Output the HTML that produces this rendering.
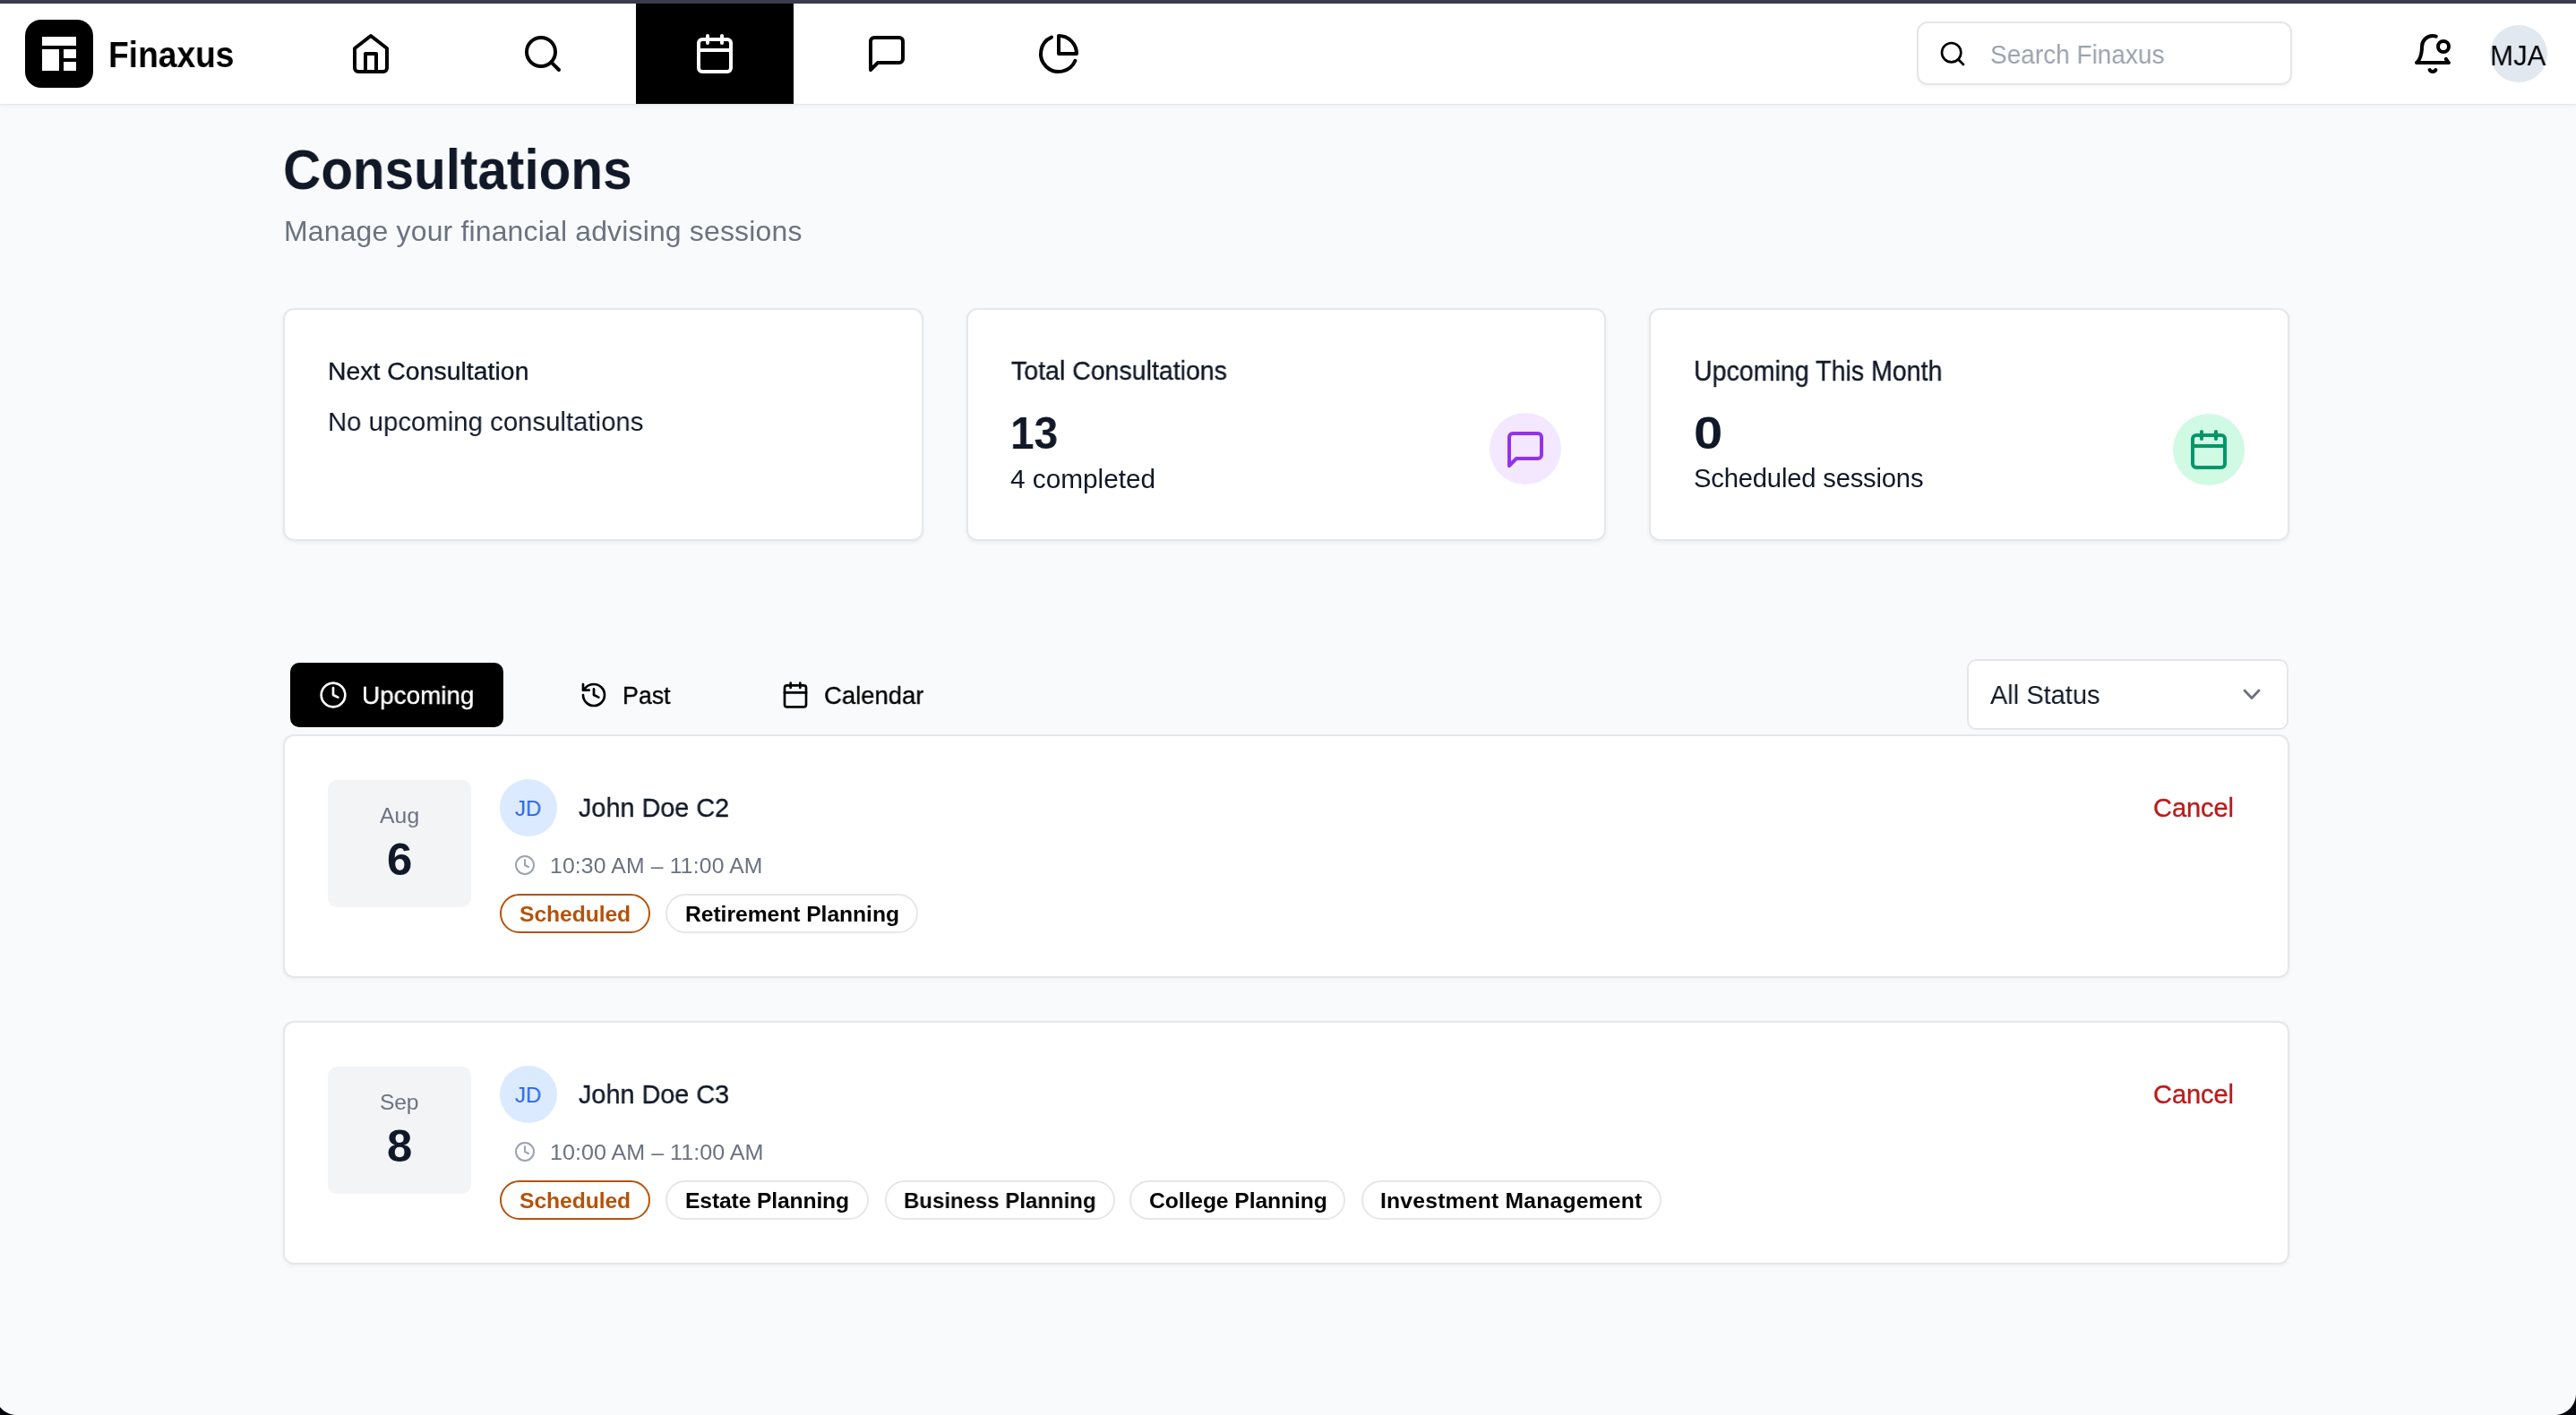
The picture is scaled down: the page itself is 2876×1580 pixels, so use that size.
<!DOCTYPE html>
<html><head><meta charset="utf-8"><title>Finaxus - Consultations</title>
<style>
*{box-sizing:border-box;margin:0;padding:0}
html,body{width:2876px;height:1580px;overflow:hidden;background:#f9fafb;font-family:"Liberation Sans",sans-serif}
.t{position:absolute;line-height:1;white-space:nowrap;will-change:transform}
.ic{position:absolute;display:block}
.bx{position:absolute}
</style></head><body>
<div class="bx" style="left:0;top:0;width:2876px;height:4px;background:#3c3c4e"></div>
<div class="bx" style="left:0;top:4px;width:2876px;height:112px;background:#fff;box-shadow:0 1px 0 #e5e7eb,0 3px 8px rgba(0,0,0,0.05)"></div>
<div class="bx" style="left:28px;top:22px;width:76px;height:76px;background:#000;border-radius:18px"></div>
<div class="bx" style="left:47px;top:41px;width:38px;height:10px;background:#fff"></div>
<div class="bx" style="left:47px;top:55px;width:19px;height:24px;background:#fff"></div>
<div class="bx" style="left:71px;top:55px;width:14px;height:10px;background:#fff"></div>
<div class="bx" style="left:71px;top:69px;width:14px;height:10px;background:#fff"></div>
<div class="t" style="left:121.20px;top:41.00px;font-size:40.70px;font-weight:bold;color:#000;letter-spacing:0.000px;transform:scaleX(0.9135);transform-origin:0 0;">Finaxus</div>
<div class="bx" style="left:710px;top:4px;width:176px;height:112px;background:#000"></div>
<svg class="ic" style="left:390px;top:36px" width="48" height="48" viewBox="0 0 24 24" fill="none" stroke="#000" stroke-width="2" stroke-linecap="round" stroke-linejoin="round"><path d="m3 9 9-7 9 7v11a2 2 0 0 1-2 2H5a2 2 0 0 1-2-2z"/><polyline points="9 22 9 12 15 12 15 22"/></svg>
<svg class="ic" style="left:582px;top:36px" width="48" height="48" viewBox="0 0 24 24" fill="none" stroke="#000" stroke-width="2" stroke-linecap="round" stroke-linejoin="round"><circle cx="11" cy="11" r="8"/><path d="m21 21-4.34-4.34"/></svg>
<svg class="ic" style="left:774px;top:36px" width="48" height="48" viewBox="0 0 24 24" fill="none" stroke="#fff" stroke-width="2" stroke-linecap="round" stroke-linejoin="round"><path d="M8 2v4"/><path d="M16 2v4"/><rect width="18" height="18" x="3" y="4" rx="2"/><path d="M3 10h18"/></svg>
<svg class="ic" style="left:966px;top:36px" width="48" height="48" viewBox="0 0 24 24" fill="none" stroke="#000" stroke-width="2" stroke-linecap="round" stroke-linejoin="round"><path d="M21 15a2 2 0 0 1-2 2H7l-4 4V5a2 2 0 0 1 2-2h14a2 2 0 0 1 2 2z"/></svg>
<svg class="ic" style="left:1158px;top:36px" width="48" height="48" viewBox="0 0 24 24" fill="none" stroke="#000" stroke-width="2" stroke-linecap="round" stroke-linejoin="round"><path d="M21.21 15.89A10 10 0 1 1 8 2.83"/><path d="M22 12A10 10 0 0 0 12 2v10z"/></svg>
<div class="bx" style="left:2140px;top:24px;width:419px;height:71px;background:#fff;border:2px solid #e6e6e8;border-radius:12px;box-shadow:0 2px 4px rgba(0,0,0,0.04)"></div>
<svg class="ic" style="left:2164px;top:44px" width="32" height="32" viewBox="0 0 24 24" fill="none" stroke="#000" stroke-width="2" stroke-linecap="round" stroke-linejoin="round"><circle cx="11" cy="11" r="8"/><path d="m21 21-4.34-4.34"/></svg>
<div class="t" style="left:2222.20px;top:47.00px;font-size:29.07px;font-weight:normal;color:#9ca3af;letter-spacing:0.000px;transform:scaleX(0.9630);transform-origin:0 0;">Search Finaxus</div>
<svg class="ic" style="left:2692px;top:36px" width="48" height="48" viewBox="0 0 24 24" fill="none" stroke="#000" stroke-width="2" stroke-linecap="round" stroke-linejoin="round"><path d="M19.4 14.9C20.2 16.4 21 17 21 17H3s3-2 3-9c0-3.3 2.7-6 6-6 .7 0 1.3.1 1.9.3"/><path d="M10.3 21a1.94 1.94 0 0 0 3.4 0"/><circle cx="18" cy="8" r="3"/></svg>
<div class="bx" style="left:2780px;top:28px;width:64px;height:64px;background:#e2e8f0;border-radius:50%"></div>
<div class="t" style="left:2780.20px;top:46.00px;font-size:31.98px;font-weight:normal;color:#000;letter-spacing:0.000px;transform:scaleX(0.9773);transform-origin:0 0;">MJA</div>
<div class="t" style="left:316.20px;top:158.00px;font-size:62.50px;font-weight:bold;color:#111827;letter-spacing:0.000px;transform:scaleX(0.9348);transform-origin:0 0;">Consultations</div>
<div class="t" style="left:317.20px;top:242.00px;font-size:31.98px;font-weight:normal;color:#6b7280;letter-spacing:0.162px;">Manage your financial advising sessions</div>
<div class="bx" style="left:316px;top:344px;width:714.67px;height:260px;background:#fff;border:2px solid #e6e7ea;border-radius:12px;box-shadow:0 2px 4px rgba(0,0,0,0.05)"></div>
<div class="bx" style="left:1078.67px;top:344px;width:714.66px;height:260px;background:#fff;border:2px solid #e6e7ea;border-radius:12px;box-shadow:0 2px 4px rgba(0,0,0,0.05)"></div>
<div class="bx" style="left:1841.33px;top:344px;width:714.67px;height:260px;background:#fff;border:2px solid #e6e7ea;border-radius:12px;box-shadow:0 2px 4px rgba(0,0,0,0.05)"></div>
<div class="t" style="left:366.20px;top:400.00px;font-size:28.34px;font-weight:normal;color:#111827;letter-spacing:0.049px;-webkit-text-stroke:0.35px currentColor;">Next Consultation</div>
<div class="t" style="left:366.20px;top:455.60px;font-size:29.94px;font-weight:normal;color:#111827;letter-spacing:0.000px;transform:scaleX(0.9805);transform-origin:0 0;">No upcoming consultations</div>
<div class="t" style="left:1128.70px;top:400.00px;font-size:29.07px;font-weight:normal;color:#111827;letter-spacing:0.000px;transform:scaleX(0.9812);transform-origin:0 0;-webkit-text-stroke:0.35px currentColor;">Total Consultations</div>
<div class="t" style="left:1127.70px;top:458.70px;font-size:50.87px;font-weight:bold;color:#111827;letter-spacing:0.000px;transform:scaleX(0.94);transform-origin:0 0;">13</div>
<div class="t" style="left:1128.20px;top:519.50px;font-size:29.80px;font-weight:normal;color:#111827;letter-spacing:-0.023px;">4 completed</div>
<div class="bx" style="left:1663px;top:461px;width:80px;height:80px;background:#f3e8ff;border-radius:50%"></div>
<svg class="ic" style="left:1679px;top:478px" width="48" height="48" viewBox="0 0 24 24" fill="none" stroke="#9333ea" stroke-width="2" stroke-linecap="round" stroke-linejoin="round"><path d="M21 15a2 2 0 0 1-2 2H7l-4 4V5a2 2 0 0 1 2-2h14a2 2 0 0 1 2 2z"/></svg>
<div class="t" style="left:1891.20px;top:399.00px;font-size:30.52px;font-weight:normal;color:#111827;letter-spacing:0.000px;transform:scaleX(0.9365);transform-origin:0 0;-webkit-text-stroke:0.35px currentColor;">Upcoming This Month</div>
<div class="t" style="left:1890.70px;top:458.70px;font-size:50.87px;font-weight:bold;color:#111827;letter-spacing:0.000px;transform:scaleX(1.14);transform-origin:0 0;">0</div>
<div class="t" style="left:1891.20px;top:520.40px;font-size:29.22px;font-weight:normal;color:#111827;letter-spacing:-0.198px;">Scheduled sessions</div>
<div class="bx" style="left:2426px;top:462px;width:80px;height:80px;background:#d1fae5;border-radius:50%"></div>
<svg class="ic" style="left:2442px;top:478px" width="48" height="48" viewBox="0 0 24 24" fill="none" stroke="#059669" stroke-width="2" stroke-linecap="round" stroke-linejoin="round"><path d="M8 2v4"/><path d="M16 2v4"/><rect width="18" height="18" x="3" y="4" rx="2"/><path d="M3 10h18"/></svg>
<div class="bx" style="left:324px;top:740px;width:238px;height:72px;background:#000;border-radius:10px"></div>
<svg class="ic" style="left:356px;top:760px" width="32" height="32" viewBox="0 0 24 24" fill="none" stroke="#fff" stroke-width="2" stroke-linecap="round" stroke-linejoin="round"><circle cx="12" cy="12" r="10"/><polyline points="12 6 12 12 16 14"/></svg>
<div class="t" style="left:404.20px;top:762.00px;font-size:28.34px;font-weight:normal;color:#fff;letter-spacing:0.000px;transform:scaleX(0.9835);transform-origin:0 0;-webkit-text-stroke:0.35px currentColor;">Upcoming</div>
<svg class="ic" style="left:647px;top:760px" width="32" height="32" viewBox="0 0 24 24" fill="none" stroke="#000" stroke-width="2" stroke-linecap="round" stroke-linejoin="round"><path d="M3 12a9 9 0 1 0 9-9 9.75 9.75 0 0 0-6.74 2.74L3 8"/><path d="M3 3v5h5"/><path d="M12 7v5l4 2"/></svg>
<div class="t" style="left:695.20px;top:762.00px;font-size:28.34px;font-weight:normal;color:#000;letter-spacing:0.000px;transform:scaleX(0.9433);transform-origin:0 0;-webkit-text-stroke:0.35px currentColor;">Past</div>
<svg class="ic" style="left:872px;top:760px" width="32" height="32" viewBox="0 0 24 24" fill="none" stroke="#000" stroke-width="2" stroke-linecap="round" stroke-linejoin="round"><path d="M8 2v4"/><path d="M16 2v4"/><rect width="18" height="18" x="3" y="4" rx="2"/><path d="M3 10h18"/></svg>
<div class="t" style="left:920.20px;top:762.00px;font-size:28.34px;font-weight:normal;color:#000;letter-spacing:0.000px;transform:scaleX(0.9694);transform-origin:0 0;-webkit-text-stroke:0.35px currentColor;">Calendar</div>
<div class="bx" style="left:2196px;top:736px;width:359px;height:79px;background:#fff;border:2px solid #e6e6e8;border-radius:10px"></div>
<div class="t" style="left:2222.20px;top:761.40px;font-size:29.80px;font-weight:normal;color:#111827;letter-spacing:0.000px;transform:scaleX(0.9733);transform-origin:0 0;">All Status</div>
<svg class="ic" style="left:2496px;top:762px" width="36" height="28" viewBox="0 0 36 28"><polyline points="10,9 18,17.5 26,9" fill="none" stroke="#6b7280" stroke-width="2.8" stroke-linecap="round" stroke-linejoin="round"/></svg>
<div class="bx" style="left:316px;top:820px;width:2240px;height:272px;background:#fff;border:2px solid #e5e7eb;border-radius:12px;box-shadow:0 2px 4px rgba(0,0,0,0.04)"></div>
<div class="bx" style="left:366px;top:871px;width:160px;height:142px;background:#f3f4f6;border-radius:10px"></div>
<div class="t" style="left:424.20px;top:899.00px;font-size:24.71px;font-weight:normal;color:#6b7280;letter-spacing:0.121px;">Aug</div>
<div class="t" style="left:431.70px;top:934.60px;font-size:50.87px;font-weight:bold;color:#111827;letter-spacing:0.000px;">6</div>
<div class="bx" style="left:558px;top:870px;width:64px;height:64px;background:#dbeafe;border-radius:50%"></div>
<div class="t" style="left:575.20px;top:891.20px;font-size:24.56px;font-weight:normal;color:#2563eb;letter-spacing:0.000px;transform:scaleX(0.9828);transform-origin:0 0;">JD</div>
<div class="t" style="left:646.20px;top:887.00px;font-size:30.23px;font-weight:normal;color:#111827;letter-spacing:0.000px;transform:scaleX(0.9532);transform-origin:0 0;-webkit-text-stroke:0.35px currentColor;">John Doe C2</div>
<svg class="ic" style="left:574px;top:954px" width="24" height="24" viewBox="0 0 24 24" fill="none" stroke="#9ca3af" stroke-width="2" stroke-linecap="round" stroke-linejoin="round"><circle cx="12" cy="12" r="10"/><polyline points="12 6 12 12 16 14"/></svg>
<div class="t" style="left:614.20px;top:955.00px;font-size:24.71px;font-weight:normal;color:#6b7280;letter-spacing:0.170px;">10:30 AM – 11:00 AM</div>
<div class="bx" style="left:558px;top:998px;width:168px;height:44px;border:2px solid #b45309;border-radius:22px;background:#fff"></div>
<div class="t" style="left:580.20px;top:1009.00px;font-size:24.71px;font-weight:bold;color:#b45309;letter-spacing:-0.094px;">Scheduled</div>
<div class="bx" style="left:743px;top:998px;width:282px;height:44px;border:2px solid #e5e7eb;border-radius:22px;background:#fff"></div>
<div class="t" style="left:765.00px;top:1009.00px;font-size:24.71px;font-weight:bold;color:#050505;letter-spacing:-0.065px;">Retirement Planning</div>
<div class="t" style="left:2403.70px;top:887.70px;font-size:29.07px;font-weight:normal;color:#b91c1c;letter-spacing:-0.099px;-webkit-text-stroke:0.35px currentColor;">Cancel</div>
<div class="bx" style="left:316px;top:1140px;width:2240px;height:272px;background:#fff;border:2px solid #e5e7eb;border-radius:12px;box-shadow:0 2px 4px rgba(0,0,0,0.04)"></div>
<div class="bx" style="left:366px;top:1191px;width:160px;height:142px;background:#f3f4f6;border-radius:10px"></div>
<div class="t" style="left:424.20px;top:1219.00px;font-size:24.71px;font-weight:normal;color:#6b7280;letter-spacing:-0.229px;">Sep</div>
<div class="t" style="left:431.70px;top:1254.60px;font-size:50.87px;font-weight:bold;color:#111827;letter-spacing:0.000px;">8</div>
<div class="bx" style="left:558px;top:1190px;width:64px;height:64px;background:#dbeafe;border-radius:50%"></div>
<div class="t" style="left:575.20px;top:1211.20px;font-size:24.56px;font-weight:normal;color:#2563eb;letter-spacing:0.000px;transform:scaleX(0.9828);transform-origin:0 0;">JD</div>
<div class="t" style="left:646.20px;top:1207.00px;font-size:30.23px;font-weight:normal;color:#111827;letter-spacing:0.000px;transform:scaleX(0.9532);transform-origin:0 0;-webkit-text-stroke:0.35px currentColor;">John Doe C3</div>
<svg class="ic" style="left:574px;top:1274px" width="24" height="24" viewBox="0 0 24 24" fill="none" stroke="#9ca3af" stroke-width="2" stroke-linecap="round" stroke-linejoin="round"><circle cx="12" cy="12" r="10"/><polyline points="12 6 12 12 16 14"/></svg>
<div class="t" style="left:614.20px;top:1275.00px;font-size:24.71px;font-weight:normal;color:#6b7280;letter-spacing:0.000px;transform:scaleX(1.0173);transform-origin:0 0;">10:00 AM – 11:00 AM</div>
<div class="bx" style="left:558px;top:1318px;width:168px;height:44px;border:2px solid #b45309;border-radius:22px;background:#fff"></div>
<div class="t" style="left:580.20px;top:1329.00px;font-size:24.71px;font-weight:bold;color:#b45309;letter-spacing:-0.094px;">Scheduled</div>
<div class="bx" style="left:743px;top:1318px;width:227px;height:44px;border:2px solid #e5e7eb;border-radius:22px;background:#fff"></div>
<div class="t" style="left:765.00px;top:1329.00px;font-size:24.71px;font-weight:bold;color:#050505;letter-spacing:-0.155px;">Estate Planning</div>
<div class="bx" style="left:988px;top:1318px;width:256.5px;height:44px;border:2px solid #e5e7eb;border-radius:22px;background:#fff"></div>
<div class="t" style="left:1008.90px;top:1329.00px;font-size:24.71px;font-weight:bold;color:#050505;letter-spacing:0.000px;transform:scaleX(0.9708);transform-origin:0 0;">Business Planning</div>
<div class="bx" style="left:1261px;top:1318px;width:241px;height:44px;border:2px solid #e5e7eb;border-radius:22px;background:#fff"></div>
<div class="t" style="left:1283.20px;top:1329.00px;font-size:24.71px;font-weight:bold;color:#050505;letter-spacing:-0.103px;">College Planning</div>
<div class="bx" style="left:1520px;top:1318px;width:335px;height:44px;border:2px solid #e5e7eb;border-radius:22px;background:#fff"></div>
<div class="t" style="left:1541.00px;top:1329.00px;font-size:24.71px;font-weight:bold;color:#050505;letter-spacing:0.197px;">Investment Management</div>
<div class="t" style="left:2403.70px;top:1207.70px;font-size:29.07px;font-weight:normal;color:#b91c1c;letter-spacing:-0.099px;-webkit-text-stroke:0.35px currentColor;">Cancel</div>
<div class="bx" style="left:0;top:1556px;width:19px;height:24px;background:radial-gradient(circle at 18.7px 0,rgba(0,0,0,0) 23.5px,#05050d 24.5px)"></div>
<div class="bx" style="left:2852px;top:1556px;width:24px;height:24px;background:radial-gradient(circle at 0 0,rgba(0,0,0,0) 23.5px,#05050d 24.5px)"></div>
</body></html>
